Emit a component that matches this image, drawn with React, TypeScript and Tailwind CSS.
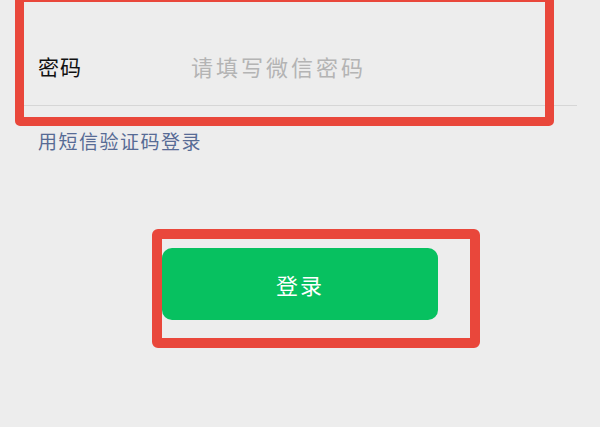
import React from 'react';

const cjk = { fontFamily: '"Noto Sans CJK SC", "Noto Sans", sans-serif' };

export default function App() {
  return (
    <div
      className="relative w-[600px] h-[427px] overflow-hidden bg-[#ededed]"
      style={cjk}
    >
      {/* password row */}
      <div className="h-[105px] flex items-end pb-[25px] pl-[38px]">
        <span className="w-[153px] text-[21px] leading-[28px] tracking-[1px] text-[#111]">密码</span>
        <span className="text-[22px] leading-[28px] tracking-[3px] text-[#b4b4b4]">请填写微信密码</span>
      </div>
      <div className="mx-[23px] border-b border-[#d6d6d6]" />

      <div className="mt-[21px] pl-[38px] text-[19px] leading-[28px] tracking-[1.5px] text-[#576b95]">
        用短信验证码登录
      </div>

      <div className="mt-[93px] pl-[162px]">
        <button className="w-[276px] h-[72px] rounded-[10px] bg-[#07c160] text-white text-[22px] tracking-[2px] flex items-center justify-center">
          登录
        </button>
      </div>

      {/* red annotation boxes */}
      <div className="absolute left-[15px] top-[-7px] w-[539px] h-[133px] border-[9px] border-[#e9473b] rounded-[5px]" />
      <div className="absolute left-[152px] top-[229px] w-[328px] h-[119px] border-[10px] border-[#e9473b] rounded-[6px]" />
    </div>
  );
}
